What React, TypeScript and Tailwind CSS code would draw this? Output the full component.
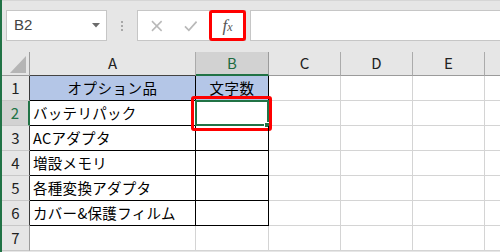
import React from 'react';

const cols = ['A', 'B', 'C', 'D', 'E'];
const items = ['バッテリパック', 'ACアダプタ', '増設メモリ', '各種変換アダプタ', 'カバー&保護フィルム'];

const jp = { fontFamily: '"Noto Sans CJK JP", "Noto Sans", sans-serif' };

function NameBox() {
  return (
    <div className="ml-[4px] w-[101px] h-[31px] bg-white border border-[#c6c6c6] flex items-center justify-between pl-[7px] pr-[6px]">
      <span className="text-[15px] text-[#444]" style={{ fontFamily: '"Liberation Sans", Arial, sans-serif' }}>B2</span>
      <svg width="8" height="5" viewBox="0 0 8 5">
        <path d="M0 0 L8 0 L4 4.5 Z" fill="#6b6b6b" />
      </svg>
    </div>
  );
}

function FormulaButtons() {
  return (
    <div className="ml-[14px] w-[109px] h-[31px] bg-white border border-[#c6c6c6] flex items-center">
      <svg width="12" height="12" viewBox="0 0 12 12" className="ml-[13px]">
        <path d="M1 1 L11 11 M11 1 L1 11" stroke="#b9b9b9" strokeWidth="1.6" />
      </svg>
      <svg width="14" height="12" viewBox="0 0 14 12" className="ml-[21px]">
        <path d="M1 6.5 L5 10.5 L13 1.5" stroke="#b9b9b9" strokeWidth="1.8" fill="none" />
      </svg>
      <div className="relative ml-[13px] w-[36px] h-[30px] flex items-center justify-center">
        <span className="italic text-[17px] text-[#555] leading-none" style={{ fontFamily: '"Liberation Serif", serif' }}>
          f<span className="text-[12px]">x</span>
        </span>
        <div className="absolute -left-[1px] -top-[1px] w-[37px] h-[31px] border-[3px] border-[#ff0000] rounded-[3px]" />
      </div>
    </div>
  );
}

function HeaderRow() {
  return (
    <>
      <div className="relative bg-[#e6e6e6] border-r border-b border-[#9b9b9b]">
        <svg width="27" height="23" viewBox="0 0 27 23" className="absolute left-0 top-0">
          <path d="M8 21 L24 4 L24 21 Z" fill="#b5b5b5" />
        </svg>
      </div>
      {cols.map((c) => {
        const sel = c === 'B';
        return (
          <div
            key={c}
            className={
              'flex items-center justify-center text-[15px] border-r ' +
              (sel
                ? 'bg-[#d2d2d2] text-[#1e6b41] border-b-2 border-b-[#217346] border-r-[#9b9b9b]'
                : c === 'A'
                ? 'bg-[#e6e6e6] text-[#222] border-b border-b-[#444] border-r-[#ababab]'
                : 'bg-[#e6e6e6] text-[#222] border-b border-b-[#9b9b9b] border-r-[#ababab]')
            }
            style={jp}
          >
            {c}
          </div>
        );
      })}
      {/* next column's header, mostly past the right edge */}
      <div className="bg-[#e6e6e6] border-b border-b-[#9b9b9b]" />
    </>
  );
}

function RowHead({ n }: { n: number }) {
  const sel = n === 2;
  const edge = sel ? 'border-r-2 border-r-[#217346]' : n <= 6 ? 'border-r border-r-[#3a3a3a]' : 'border-r border-r-[#9b9b9b]';
  return (
    <div
      className={`flex items-center justify-center text-[15px] border-b border-b-[#c8c8c8] ${edge} ${sel ? 'bg-[#d2d2d2] text-[#217346]' : 'bg-[#e6e6e6] text-[#222]'}`}
      style={jp}
    >
      {n}
    </div>
  );
}

function Blank({ last }: { last?: boolean }) {
  return <div className={last ? 'border-b border-[#d4d4d4]' : 'border-r border-b border-[#d4d4d4]'} />;
}

export default function App() {
  return (
    <div className="w-[500px] h-[252px] overflow-hidden bg-[#e6e6e6] border-l-2 border-[#217346]" style={jp}>
      {/* ribbon strip: name box, formula buttons, formula input */}
      <div className="h-[52px] border-t border-[#d6d6d6] flex items-start pt-[9px]">
        <NameBox />
        <div className="ml-[14px] mt-[11px] flex flex-col gap-[2px]">
          <span className="w-[2px] h-[2px] bg-[#a8a8a8]" />
          <span className="w-[2px] h-[2px] bg-[#a8a8a8]" />
          <span className="w-[2px] h-[2px] bg-[#a8a8a8]" />
        </div>
        <FormulaButtons />
        <div className="ml-[4px] flex-1 h-[31px] bg-white border border-[#c6c6c6] border-r-0" />
      </div>

      {/* sheet grid */}
      <div className="grid grid-cols-[28px_166px_73px_72px_72px_72px_1fr] grid-rows-[24px_repeat(7,25px)] bg-white">
        <HeaderRow />

        <RowHead n={1} />
        <div className="bg-[#b4c6e7] border-r border-b border-black flex items-center justify-center text-[14.5px] text-black tracking-[0.5px]">
          オプション品
        </div>
        <div className="bg-[#b4c6e7] border-r border-b border-black flex items-center justify-center text-[14.5px] text-black tracking-[0.5px]">
          文字数
        </div>
        <Blank />
        <Blank />
        <Blank />
        <Blank last />

        {items.map((t, i) => (
          <React.Fragment key={t}>
            <RowHead n={i + 2} />
            <div className="border-r border-b border-black flex items-center pl-[3px] text-[14.5px] text-black tracking-[0.3px] whitespace-nowrap">
              {t}
            </div>
            <div className="relative border-r border-b border-black">
              {i === 0 && (
                <>
                  <div className="absolute -left-[1px] -top-[1px] w-[74px] h-[26px] border-2 border-[#217346]" />
                  <div className="absolute left-[68px] top-[21px] w-[6px] h-[6px] bg-[#217346] border border-white" />
                  <div className="absolute -left-[5px] -top-[5px] w-[81px] h-[35px] border-[3px] border-[#ff0000] rounded-[3px]" />
                </>
              )}
            </div>
            <Blank />
            <Blank />
            <Blank />
            <Blank last />
          </React.Fragment>
        ))}

        <RowHead n={7} />
        <Blank />
        <Blank />
        <Blank />
        <Blank />
        <Blank />
        <Blank last />
      </div>
    </div>
  );
}
